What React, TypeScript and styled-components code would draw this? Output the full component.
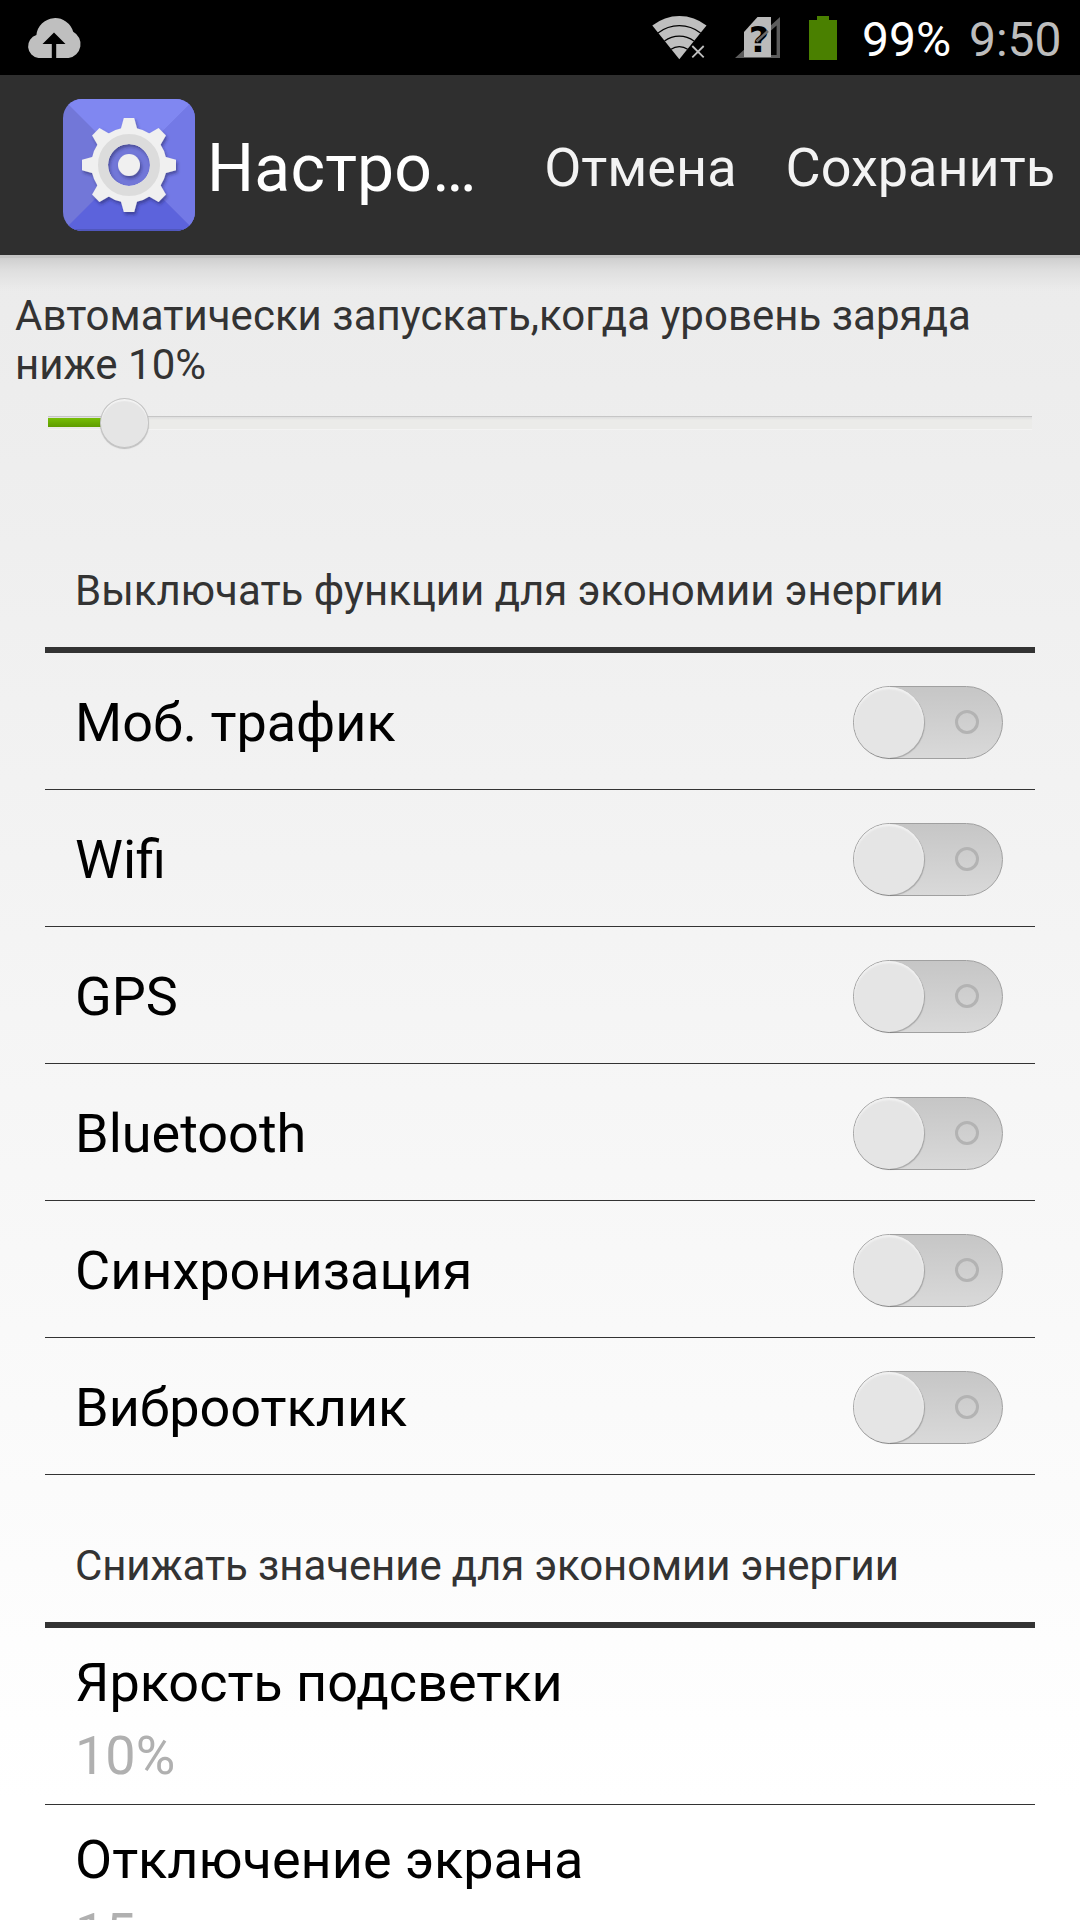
import React from "react";
import styled, { createGlobalStyle } from "styled-components";

const GlobalStyle = createGlobalStyle`
  * { box-sizing: border-box; }
  html, body { margin: 0; padding: 0; }
  body { overflow: hidden; background: #fff; }
`;

const Screen = styled.div`
  width: 1080px;
  height: 1920px;
  overflow: hidden;
  display: flex;
  flex-direction: column;
  font-family: Roboto, "Noto Sans", sans-serif;
  color: #000;
  background: linear-gradient(#e9e9e9 75px, #fff 1800px);
`;

const StatusBar = styled.div`
  flex: none;
  height: 75px;
  background: #000;
  display: flex;
  align-items: center;
  padding: 0 19px 0 25px;
`;

const StatusIcon = styled.svg<{ $gap?: number }>`
  flex: none;
  display: block;
  margin-right: ${(p) => p.$gap ?? 0}px;
`;

const StatusSpacer = styled.div`
  flex: 1;
`;

const StatusText = styled.span<{ $color: string; $width: number }>`
  flex: none;
  width: ${(p) => p.$width}px;
  font-size: 48px;
  line-height: 71px;
  padding-top: 4px;
  white-space: nowrap;
  color: ${(p) => p.$color};
`;

const ActionBar = styled.header`
  flex: none;
  height: 180px;
  background: #2f2f2f;
  display: flex;
  align-items: center;
  padding: 0 25px 0 63px;
`;

const AppIcon = styled.svg`
  flex: none;
  display: block;
`;

const Title = styled.h1`
  flex: 1;
  margin: 0 0 0 12px;
  padding-top: 7px;
  font-size: 66px;
  font-weight: 400;
  line-height: 78px;
  letter-spacing: 0.2px;
  white-space: nowrap;
  color: #fff;
`;

const ActionButton = styled.button<{ $gap?: number }>`
  flex: none;
  border: 0;
  background: none;
  padding: 5px 0 0;
  margin: 0 0 0 ${(p) => p.$gap ?? 0}px;
  font: 400 54px/64px Roboto, "Noto Sans", sans-serif;
  color: #f3f3f3;
`;

const BarShadow = styled.div`
  flex: none;
  height: 36px;
  border-top: 3px solid #c4c4c4;
  background: linear-gradient(#cfcfcf, #dedede 35%, #e6e6e6 70%, rgba(235, 235, 235, 0));
`;

const Description = styled.p`
  flex: none;
  margin: 0;
  padding-left: 15px;
  height: 98px;
  font-size: 42px;
  line-height: 49px;
  letter-spacing: 0.02px;
  color: #333;
`;

const SliderBox = styled.div`
  flex: none;
  position: relative;
  height: 70px;
  margin: 0 48px;
  padding-top: 27px;
`;

const SliderTrack = styled.div`
  height: 14px;
  border-top: 1px solid #c6c6c6;
  border-bottom: 1px solid #f3f3f3;
  background: linear-gradient(#dedede, #ebebe9 3px);
`;

const SliderFill = styled.div<{ $width: number }>`
  width: ${(p) => p.$width}px;
  height: 9px;
  margin-top: 1px;
  background: linear-gradient(#77be06, #5f9c00);
`;

const SliderThumb = styled.div<{ $left: number }>`
  position: absolute;
  left: ${(p) => p.$left}px;
  top: 9px;
  width: 49px;
  height: 50px;
  border-radius: 50%;
  border: 1px solid #c4c4c4;
  background: #e5e5e5;
  box-shadow: inset 0 2px 1px #f3f3f3, 0 1px 1px rgba(0, 0, 0, 0.2);
`;

const Section = styled.section`
  flex: none;
  margin: 0 45px;
`;

const SectionTitle = styled.h2<{ $height: number; $spacing?: number }>`
  margin: 0;
  height: ${(p) => p.$height}px;
  display: flex;
  align-items: flex-end;
  padding: 0 30px 32px;
  border-bottom: 6px solid #333;
  font-size: 42px;
  font-weight: 400;
  line-height: 49px;
  letter-spacing: ${(p) => p.$spacing ?? 0}px;
  white-space: nowrap;
  color: #333;
`;

const ToggleRow = styled.div`
  height: 137px;
  border-bottom: 1px solid #333;
  display: flex;
  align-items: center;
  justify-content: space-between;
  padding: 3px 32px 0 30px;
`;

const RowLabel = styled.span`
  font-size: 54px;
  line-height: 73px;
  white-space: nowrap;
`;

const Switch = styled.span`
  width: 150px;
  height: 73px;
  border-radius: 37px;
  border: 1px solid #a0a0a0;
  background: linear-gradient(#c6c6c6, #d9d9d9);
  display: flex;
  align-items: center;
  justify-content: space-between;
  padding: 0 23px 0 0;
`;

const SwitchThumb = styled.span`
  width: 70px;
  height: 71px;
  border-radius: 50%;
  background: #e5e5e5;
  box-shadow: inset 0 2px 2px #f2f2f2, 1px 1px 1px rgba(0, 0, 0, 0.22);
`;

const SwitchRing = styled.span`
  width: 24px;
  height: 24px;
  margin-bottom: 2px;
  border-radius: 50%;
  border: 3.5px solid #b3b3b3;
`;

const ValueRow = styled.div`
  height: 177px;
  border-bottom: 1px solid #333;
  padding: 18px 30px 0;
  display: flex;
  flex-direction: column;
`;

const RowValue = styled.span`
  font-size: 54px;
  line-height: 73px;
  color: #b0b0b0;
`;

const CloudIcon = () => (
  <StatusIcon width="58" height="75" viewBox="25 0 58 75">
    <path
      d="M38.5 58 A11.8 11.8 0 0 1 36.4 35 A18.8 18.8 0 0 1 73.2 31.8 A14 14 0 0 1 68.5 58 Z"
      fill="#bfbfbf"
    />
    <path d="M54 32.5 L65.5 44 H56.2 V59 H51.8 V44 H42.5 Z" fill="#000" />
  </StatusIcon>
);

const WifiIcon = () => (
  <StatusIcon width="56" height="75" viewBox="652 0 56 75" $gap={27}>
    <path d="M679.3 59.3 L652.3 25.5 A43.5 43.5 0 0 1 706.5 25.5 Z" fill="#bfbfbf" />
    <g fill="none" stroke="#000" strokeWidth="1.3">
      <path d="M658 33 A34.5 34.5 0 0 1 700.6 33" />
      <path d="M664.5 41 A24.5 24.5 0 0 1 694 41" />
      <path d="M671 49.3 A14 14 0 0 1 687.6 49.3" />
    </g>
    <path d="M692.3 46 L703.7 57.4 M703.7 46 L692.3 57.4" stroke="#bfbfbf" strokeWidth="1.8" />
  </StatusIcon>
);

const SimIcon = () => (
  <StatusIcon width="45" height="75" viewBox="735 0 45 75" $gap={29}>
    <path d="M735 58 L780 17 V58 Z M771 55 H776.6 V25.5 L771 30.6 Z" fill="#5c5c5c" fillRule="evenodd" />
    <path d="M744 57 V32 L757.5 17 H771 V57 Z" fill="#bababa" />
    <text x="759" y="52" textAnchor="middle" fontFamily="DejaVu Sans" fontWeight="700" fontSize="35.5">
      ?
    </text>
    <path d="M756.5 41.5 L768 31" stroke="#6a6a6a" strokeWidth="2.4" />
  </StatusIcon>
);

const BatteryIcon = () => (
  <StatusIcon width="28" height="75" viewBox="809 0 28 75" $gap={25}>
    <path d="M809 20 H817 V16 H829 V20 H837 V60 H809 Z" fill="#4a8000" />
  </StatusIcon>
);

const TOOTH = "M-8.2 -36 L-5.2 -47 H5.2 L8.2 -36 Z";

const SettingsIcon = () => (
  <AppIcon width="132" height="132" viewBox="0 0 132 132">
    <defs>
      <clipPath id="tile">
        <rect width="132" height="132" rx="19" />
      </clipPath>
      <filter id="drop" x="-20%" y="-20%" width="140%" height="140%">
        <feDropShadow dx="1.5" dy="2.5" stdDeviation="1.5" floodColor="#20205a" floodOpacity="0.5" />
      </filter>
    </defs>
    <g clipPath="url(#tile)">
      <rect width="132" height="132" fill="#7277d8" />
      <path d="M0 0 H132 L66 66 Z" fill="#8087f1" />
      <path d="M132 0 V132 L66 66 Z" fill="#7379e6" />
      <path d="M0 132 H132 L66 66 Z" fill="#5c63dc" />
      <path d="M0 131 H132" stroke="#5057bd" strokeWidth="2" />
    </g>
    <circle cx="66" cy="66" r="24" fill="#7277d8" />
    <g transform="translate(66 66)" filter="url(#drop)">
      <g fill="#f0f0f0">
        {[0, 45, 90, 135, 180, 225, 270, 315].map((angle) => (
          <path key={angle} d={TOOTH} transform={`rotate(${angle})`} />
        ))}
      </g>
      <circle r="29.3" fill="none" stroke="#f0f0f0" strokeWidth="16.6" />
      <circle r="26" fill="none" stroke="#dcdcdc" strokeWidth="10" />
      <circle r="11" fill="#f0f0f0" />
    </g>
  </AppIcon>
);

const toggles = ["Моб. трафик", "Wifi", "GPS", "Bluetooth", "Синхронизация", "Виброотклик"];

const values = [
  { label: "Яркость подсветки", value: "10%" },
  { label: "Отключение экрана", value: "15" },
];

export default function App() {
  return (
    <>
      <GlobalStyle />
      <Screen>
        <StatusBar>
          <CloudIcon />
          <StatusSpacer />
          <WifiIcon />
          <SimIcon />
          <BatteryIcon />
          <StatusText $color="#fff" $width={107}>99%</StatusText>
          <StatusText $color="#bdbdbd" $width={92}>9:50</StatusText>
        </StatusBar>
        <ActionBar>
          <SettingsIcon />
          <Title>Настро…</Title>
          <ActionButton>Отмена</ActionButton>
          <ActionButton $gap={49}>Сохранить</ActionButton>
        </ActionBar>
        <BarShadow />
        <Description>
          Автоматически запускать,когда уровень заряда
          <br />
          ниже 10%
        </Description>
        <SliderBox>
          <SliderTrack>
            <SliderFill $width={60} />
          </SliderTrack>
          <SliderThumb $left={52} />
        </SliderBox>
        <Section>
          <SectionTitle $height={194}>Выключать функции для экономии энергии</SectionTitle>
          {toggles.map((label) => (
            <ToggleRow key={label}>
              <RowLabel>{label}</RowLabel>
              <Switch>
                <SwitchThumb />
                <SwitchRing />
              </Switch>
            </ToggleRow>
          ))}
        </Section>
        <Section>
          <SectionTitle $height={153} $spacing={-0.1}>Снижать значение для экономии энергии</SectionTitle>
          {values.map((v) => (
            <ValueRow key={v.label}>
              <RowLabel>{v.label}</RowLabel>
              <RowValue>{v.value}</RowValue>
            </ValueRow>
          ))}
        </Section>
      </Screen>
    </>
  );
}
